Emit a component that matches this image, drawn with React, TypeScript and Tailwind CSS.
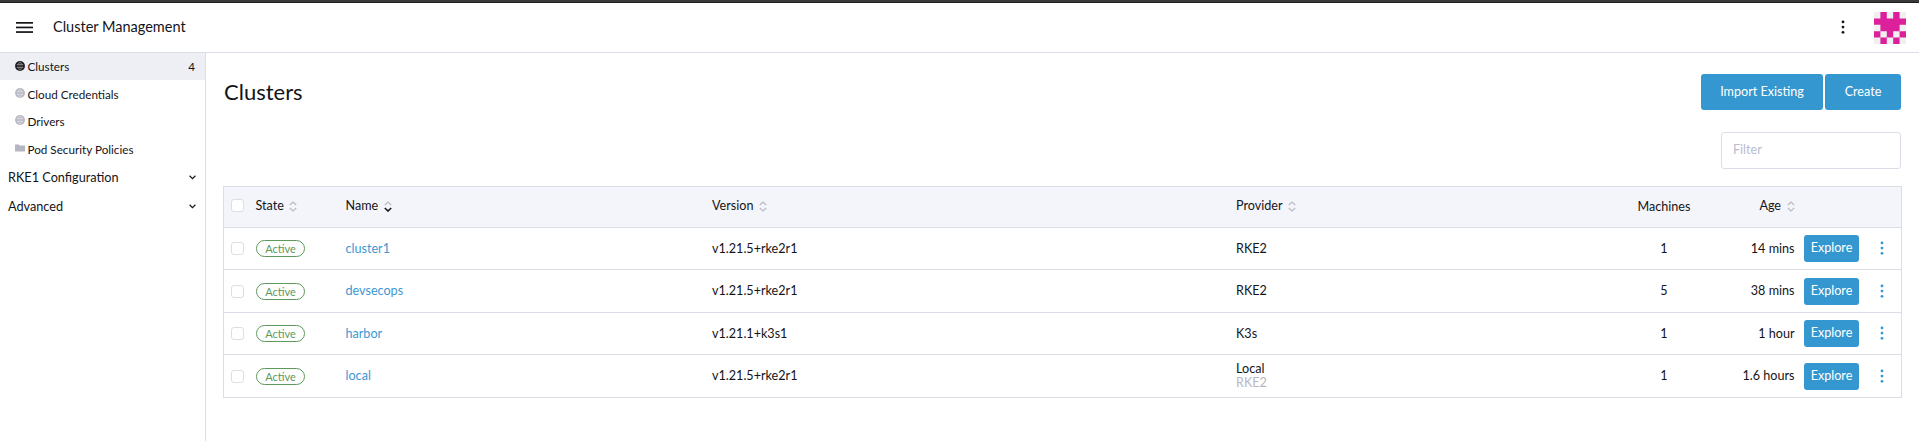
import React from "react";

const SORTS = { none: "#b9bac4", active: "#141419" };

function Sort({ active = false }: { active?: boolean }) {
  return (
    <svg width="8" height="11" viewBox="0 0 8 11" fill="none" strokeWidth="1.2" className="mt-[2px] ml-[5.5px]">
      <path d="M0.8 4 L4 1 L7.2 4" stroke={SORTS.none} />
      <path d="M0.8 7 L4 10 L7.2 7" stroke={active ? SORTS.active : SORTS.none} strokeWidth={active ? 1.6 : 1.2} />
    </svg>
  );
}

function Globe({ className }: { className: string }) {
  return (
    <svg width="10" height="10" viewBox="0 0 10 10" className={className}>
      <circle cx="5" cy="5" r="4.9" fill="currentColor" />
      <g fill="none" stroke="#fff" strokeOpacity="0.55" strokeWidth="0.6">
        <path d="M1.5 3.5H8.5M1.5 6.5H8.5M5 1V9" />
        <ellipse cx="5" cy="5" rx="2.2" ry="4" />
      </g>
    </svg>
  );
}

function Folder({ className }: { className: string }) {
  return (
    <svg width="10" height="8" viewBox="0 0 10 8" className={className}>
      <path d="M0 0.5H3.8L4.8 1.5H10V7.5H0Z" fill="currentColor" />
    </svg>
  );
}

function Kebab() {
  return (
    <svg width="4" height="14" viewBox="0 0 4 14" fill="currentColor">
      <circle cx="2" cy="1.9" r="1.4" />
      <circle cx="2" cy="7.1" r="1.4" />
      <circle cx="2" cy="12.3" r="1.4" />
    </svg>
  );
}

function Menu() {
  return (
    <svg width="17" height="11" viewBox="0 0 17 11" fill="#141419">
      <rect width="17" height="1.7" />
      <rect y="4.6" width="17" height="1.7" />
      <rect y="9.2" width="17" height="1.7" />
    </svg>
  );
}

function Chevron() {
  return (
    <svg width="7" height="5" viewBox="0 0 7 5" fill="none" stroke="#141419" strokeWidth="1.2">
      <path d="M0.6 0.8L3.5 3.6L6.4 0.8" />
    </svg>
  );
}

function Checkbox() {
  return <span className="block h-[13px] w-[13px] rounded-[3px] border border-[#dcdee7] bg-white" />;
}

const CELLS = ["01010", "11111", "01110", "10101", "01010"];

const AVATAR_PATH = CELLS.map((row, y) =>
  row
    .split("")
    .map((c, x) => (c === "1" ? `M${x * 6.4} ${y * 6.4}h6.4v6.4h-6.4z` : ""))
    .join("")
).join("");

function Avatar() {
  return (
    <svg width="32" height="32" viewBox="0 0 32 32">
      <rect width="32" height="32" fill="#f0f0f0" />
      <path d={AVATAR_PATH} fill="#dc1f9a" />
    </svg>
  );
}

const COLS = "grid grid-cols-[32px_90px_366px_524px_376px_104px_78px_65px_42px] items-center";

const ROWS = [
  { name: "cluster1", version: "v1.21.5+rke2r1", provider: "RKE2", machines: 1, age: "14 mins", h: "h-[42px]" },
  { name: "devsecops", version: "v1.21.5+rke2r1", provider: "RKE2", machines: 5, age: "38 mins", h: "h-[43px]" },
  { name: "harbor", version: "v1.21.1+k3s1", provider: "K3s", machines: 1, age: "1 hour", h: "h-[42px]" },
  { name: "local", version: "v1.21.5+rke2r1", provider: "Local", sub: "RKE2", machines: 1, age: "1.6 hours", h: "h-[43px]" },
];

const NAV = [
  { label: "Cloud Credentials", folder: false, h: "h-7" },
  { label: "Drivers", folder: false, h: "h-[27px]" },
  { label: "Pod Security Policies", folder: true, h: "h-7" },
];

export default function App() {
  return (
    <div className="flex h-[441px] w-full flex-col overflow-hidden bg-white font-['Lato',sans-serif] text-[12.6px] leading-[15px] text-[#141419]">
      <div className="h-[3px] shrink-0 border-b border-[#1d1d20] bg-[#3a3a3d]" />
      <header className="flex h-[50px] shrink-0 items-center border-b border-[#dcdee7] pb-[3px]">
        <div className="ml-[15.5px] mt-[3px]"><Menu /></div>
        <h1 className="ml-[20.5px] text-[14.5px]">Cluster Management</h1>
        <div className="ml-auto mr-[29px] mt-[2px]"><Kebab /></div>
        <div className="mr-[13px] mt-[3px]"><Avatar /></div>
      </header>
      <div className="flex min-h-0 flex-1">
        <nav className="w-[206px] shrink-0 border-r border-[#dcdee7] text-[11.7px]">
          <div className="flex h-[27px] items-center bg-[#eeeff4] pl-[15px] pr-[10px]">
            <Globe className="-mt-px text-[#141419]" />
            <span className="ml-[2.5px]">Clusters</span>
            <span className="-mt-px ml-auto">4</span>
          </div>
          {NAV.map((n) => (
            <div key={n.label} className={`flex items-center pl-[15px] ${n.h}`}>
              {n.folder ? <Folder className="-mt-[2px] text-[#b6b6c2]" /> : <Globe className="-mt-[3px] text-[#b6b6c2]" />}
              <span className="ml-[2.5px]">{n.label}</span>
            </div>
          ))}
          {["RKE1 Configuration", "Advanced"].map((g) => (
            <div key={g} className="flex h-[29px] items-center justify-between pb-px pl-2 pr-[9px] text-[12.7px]">
              {g}
              <Chevron />
            </div>
          ))}
        </nav>
        <main className="flex flex-1 flex-col pl-[17px] pr-[17px]">
          <div className="mr-px mt-[21px] flex h-9 items-center justify-between">
            <h2 className="pl-px text-[22px] leading-[26px]">Clusters</h2>
            <div className="flex gap-[2px] text-white">
              <button className="h-9 w-[122px] rounded-[3px] bg-[#3497d0] pb-px">Import Existing</button>
              <button className="h-9 w-[76px] rounded-[3px] bg-[#3497d0] pb-px">Create</button>
            </div>
          </div>
          <div className="mr-px mt-[22px] flex justify-end">
            <input placeholder="Filter" className="h-[37px] w-[180px] rounded-[3px] border border-[#dcdee7] px-[11px] pb-[2px] placeholder:text-[#b9bcd0]" />
          </div>
          <div className="mt-[17px] w-[1679px] border border-[#dcdee7]">
            <div className={`${COLS} h-10 bg-[#f4f5fa] pb-[3px]`}>
              <span className="pl-[7px]"><Checkbox /></span>
              <span className="-ml-[0.5px] flex items-center">State<Sort /></span>
              <span className="-ml-[0.5px] flex items-center">Name<Sort active /></span>
              <span className="flex items-center">Version<Sort /></span>
              <span className="flex items-center">Provider<Sort /></span>
              <span className="pt-px text-center">Machines</span>
              <span className="-mr-[0.5px] flex items-center justify-end">Age<Sort /></span>
            </div>
            {ROWS.map((r) => (
              <div key={r.name} className={`${COLS} ${r.h} border-t border-[#dcdee7]`}>
                <span className="pl-[7px]"><Checkbox /></span>
                <span className="flex">
                  <span className="flex h-[17px] w-[49px] items-center justify-center rounded-full border border-[#5d995d] text-[11px] text-[#5d995d]">Active</span>
                </span>
                <span className="-ml-[0.5px] pb-px text-[#3d98d3]">{r.name}</span>
                <span className="pb-px">{r.version}</span>
                {r.sub ? (
                  <span className="pb-px leading-[14px]">
                    {r.provider}
                    <span className="block text-[#b6b6c2]">{r.sub}</span>
                  </span>
                ) : (
                  <span className="pb-px">{r.provider}</span>
                )}
                <span className="pb-px text-center">{r.machines}</span>
                <span className="-mr-[0.5px] pb-px text-right">{r.age}</span>
                <span className="flex justify-end">
                  <button className="h-[27px] w-[55px] rounded-[3px] bg-[#3497d0] pb-[2px] text-white">Explore</button>
                </span>
                <span className="flex justify-center pb-px pl-[4px] text-[#3497d0]"><Kebab /></span>
              </div>
            ))}
          </div>
        </main>
      </div>
    </div>
  );
}
